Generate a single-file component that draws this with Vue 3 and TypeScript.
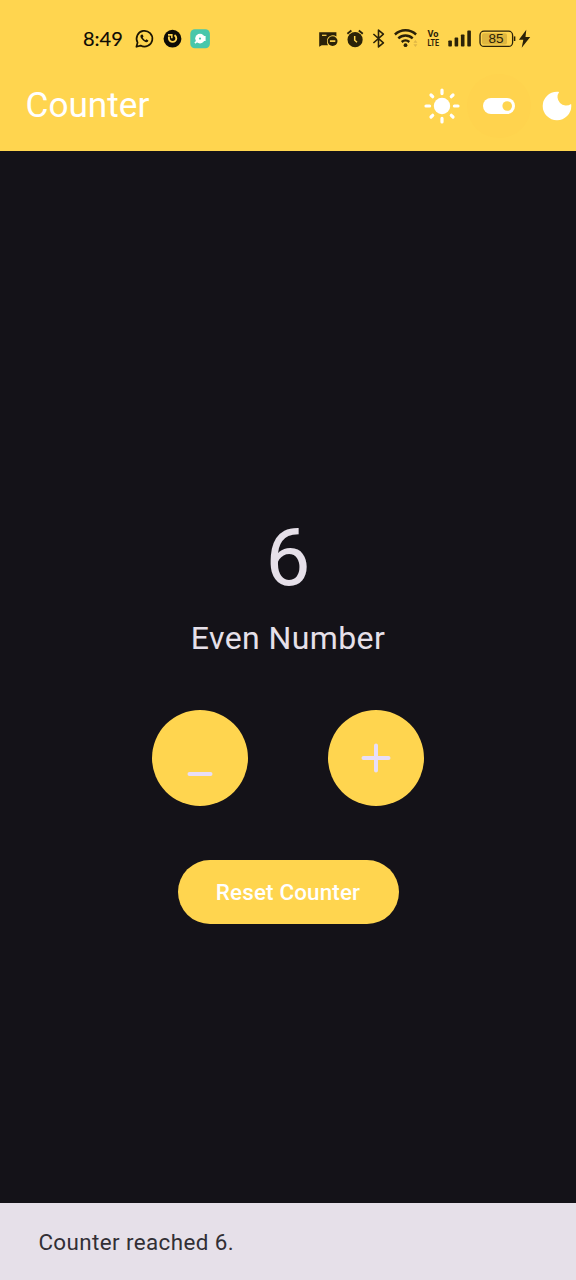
<script setup lang="ts">
import { computed, ref } from 'vue'

const count = ref(6)
const parity = computed(() => (count.value % 2 === 0 ? 'Even Number' : 'Odd Number'))
const battery = 85
</script>

<template>
  <div class="screen">
    <header class="top">
      <div class="status">
        <span class="time">8:49</span>
        <svg width="25" height="24" viewBox="134 27 25 24" fill="none" stroke="#1c1503">
          <path d="M136.400 46.800l1.200-4.200a7.900 7.900 0 1 1 3 3z" stroke-width="1.700" stroke-linejoin="round" />
          <path d="M141.200 34.700c-1.300.9-.9 2.600.8 4.600 2.200 2.600 4.600 3.800 6 2.100l.4-1-2-1.200-1 1c-1.200-.4-2.200-1.500-2.700-2.600l.8-1-.9-2z" fill="#1c1503" stroke="none" />
        </svg>
        <svg width="28" height="24" viewBox="159 27 28 24" fill="none">
          <circle cx="172.500" cy="38.700" r="8.900" fill="#0d0b05" />
          <path d="M168.900 36.500v1.700a3.700 3.700 0 0 0 7.400 0c0-1.500-.7-2.400-1.800-3.100" stroke="#ffd54f" stroke-width="1.900" />
          <path d="M168 34h4.600v4.300h-1.500v-2.500h-3.100z" fill="#ffd54f" />
        </svg>
        <svg width="26" height="24" viewBox="187 27 26 24" fill="none">
          <rect x="190.300" y="29.200" width="19.600" height="19" rx="4.500" fill="#48c7ab" />
          <circle cx="200" cy="38.600" r="4.800" fill="#fff" />
          <path d="M197.200 41.200l-2.300 1.800M204.800 36v5" stroke="#fff" stroke-width="1.600" />
          <circle cx="200" cy="38.600" r="1.100" fill="#48c7ab" />
        </svg>
        <span class="spacer" />
        <svg width="25" height="24" viewBox="318 27 25 24">
          <path d="M319.200 32.200h17.200v4.200a5.900 5.900 0 0 0-9.400 5.200 5.500 5.500 0 0 0 1 3.600h-6.300l-2.500 1.600z" fill="#2b2208" />
          <path d="M322 35.300h4.500" stroke="#ffd54f" stroke-width="1.200" />
          <circle cx="332.600" cy="41.100" r="4.900" fill="#2b2208" />
          <path d="M329.900 41.100h5.400" stroke="#ffd54f" stroke-width="1.700" />
        </svg>
        <svg width="25" height="24" viewBox="343 27 25 24" fill="none" stroke="#2b2208">
          <circle cx="355.100" cy="39.700" r="7.600" fill="#2b2208" stroke="none" />
          <path d="M347.400 33.800l4-3.300M362.800 33.800l-4-3.300" stroke-width="1.800" />
          <path d="M354.700 36v4.200l2.300 2" stroke="#ffd54f" stroke-width="1.500" />
        </svg>
        <svg width="22" height="24" viewBox="368 27 22 24" fill="none" stroke="#2b2208" stroke-width="1.600">
          <path d="M373.400 34l10 8.900-4.900 4V30.100l4.900 4-10 8.900" stroke-linejoin="round" />
        </svg>
        <svg width="33" height="24" viewBox="390 27 33 24" fill="none" stroke="#2b2208">
          <path d="M394.900 34.500a15.500 15.500 0 0 1 21.200 0M398.300 38.300a10.500 10.500 0 0 1 14.400 0M401.700 42a5.700 5.700 0 0 1 7.600 0" stroke-width="2.400" />
          <circle cx="405.500" cy="45.200" r="1.900" fill="#2b2208" stroke="none" />
          <path d="M413.400 42.700l2-2.700 2 2.700zM413.400 44.300l2 2.700 2-2.700z" fill="#dfb646" stroke="none" />
        </svg>
        <svg width="23" height="24" viewBox="423 27 23 24" class="volte">
          <text x="427.500" y="37" textLength="11" lengthAdjust="spacingAndGlyphs">Vo</text>
          <text x="427.500" y="46.200" textLength="11.500" lengthAdjust="spacingAndGlyphs">LTE</text>
        </svg>
        <svg width="29" height="24" viewBox="446 27 29 24" fill="#2b2208">
          <rect x="448.300" y="40.500" width="3.600" height="6" rx=".8" />
          <rect x="454.600" y="37.600" width="3.600" height="8.900" rx=".8" />
          <rect x="460.900" y="34.500" width="3.600" height="12" rx=".8" />
          <rect x="467.300" y="30.600" width="3.600" height="15.900" rx=".8" />
        </svg>
        <svg width="42" height="24" viewBox="475 27 42 24">
          <rect x="480" y="31.200" width="32.600" height="15.200" rx="4" fill="none" stroke="#2b2208" stroke-width="1.300" />
          <rect x="482" y="33.200" width="25" height="11.200" rx="2" fill="#dfb63f" />
          <path d="M514.600 36.400v4.600" stroke="#2b2208" stroke-width="1.500" />
          <text x="496" y="43.300" text-anchor="middle" class="battery">{{ battery }}</text>
        </svg>
        <svg width="15" height="24" viewBox="517 27 15 24" fill="#2b2208">
          <path d="M526.300 29.800l-7.400 10h4.400l-1.600 7.900 8.500-10.700h-4.700z" />
        </svg>
      </div>
      <div class="bar">
        <h1>Counter</h1>
        <svg class="sun" width="38" height="38" viewBox="-19 -19 38 38" fill="none" stroke="#fff" stroke-width="3.200" stroke-linecap="round">
          <circle r="8.200" fill="#fff" stroke="none" />
          <path d="M0-16v3.600M0 12.400v3.600M-16 0h3.600M12.400 0h3.600M-11-11l1.700 1.700M9.300 9.300l1.700 1.700M-11 11l1.700-1.700M9.300-9.300l1.700-1.700" />
        </svg>
        <button class="toggle" aria-label="Toggle theme">
          <svg width="34" height="18" viewBox="0 0 34 18">
            <rect x="1" y="1" width="32" height="16" rx="8" fill="#fff" />
            <circle cx="25.200" cy="9" r="4.800" fill="#ffd54f" />
          </svg>
        </button>
        <svg class="moon" width="30" height="30" viewBox="0 0 30 30">
          <path d="M15 .7a14.300 14.300 0 1 0 14.300 14.300c0-.8-.1-1.400-.2-2.100A8.600 8.600 0 0 1 17.100.9C16.400.8 15.700.7 15 .7z" fill="#fff" />
        </svg>
      </div>
    </header>

    <main>
      <div class="count">{{ count }}</div>
      <div class="parity">{{ parity }}</div>
      <div class="actions">
        <button class="round" aria-label="Decrease" @click="count--">
          <svg width="48" height="48" viewBox="0 0 48 48" stroke="#e8def8" stroke-width="4" stroke-linecap="round">
            <path d="M13.500 40h21" />
          </svg>
        </button>
        <button class="round" aria-label="Increase" @click="count++">
          <svg width="48" height="48" viewBox="0 0 48 48" stroke="#e8def8" stroke-width="4" stroke-linecap="round">
            <path d="M11.500 24h25M24 11.500v25" />
          </svg>
        </button>
      </div>
      <button class="reset" @click="count = 0">Reset Counter</button>
    </main>

    <footer>Counter reached {{ count }}.</footer>
  </div>
</template>

<style>
body {
  background: #141218;
}
</style>

<style scoped>
.screen {
  display: flex;
  flex-direction: column;
  width: 576px;
  height: 1280px;
  overflow: hidden;
  background: #141218;
  color: #e6e0e9;
  font-family: Roboto, 'Liberation Sans', sans-serif;
}
svg {
  display: block;
  flex: none;
}
button {
  border: 0;
  padding: 0;
  font: inherit;
}
.top {
  flex: none;
  height: 151px;
  background: #ffd54f;
}
.status {
  display: flex;
  align-items: center;
  height: 62px;
  padding: 16px 44px 0 83px;
  box-sizing: border-box;
}
.time {
  width: 51px;
  height: 26px;
  color: #0d0b05;
  font: 400 20px/24px Lato, sans-serif;
  -webkit-text-stroke: 0.15px #0d0b05;
  white-space: nowrap;
}
.spacer {
  flex: 1;
}
.volte {
  fill: #2b2208;
  font: 700 9.2px/1 Roboto, sans-serif;
}
.battery {
  fill: #2b2208;
  font: 400 13.5px 'Liberation Sans', sans-serif;
}
.bar {
  display: flex;
  align-items: center;
  height: 88px;
  padding-left: 25.5px;
}
h1 {
  flex: none;
  width: 397px;
  margin: 0;
  padding-bottom: 2px;
  color: #fff;
  font-size: 35.2px;
  font-weight: 400;
  line-height: 44px;
}
.toggle {
  display: flex;
  flex: none;
  align-items: center;
  justify-content: center;
  width: 64px;
  height: 64px;
  margin: 0 11px 0 6.5px;
  border-radius: 50%;
  background: #ffd34e;
}
main {
  display: flex;
  flex: 1;
  flex-direction: column;
  align-items: center;
  padding-top: 360px;
}
.count {
  font-size: 80px;
  line-height: 94px;
}
.parity {
  margin-top: 14px;
  font-size: 32px;
  line-height: 38px;
  letter-spacing: 0.4px;
}
.actions {
  display: flex;
  gap: 80px;
  margin-top: 53px;
}
.round {
  display: flex;
  align-items: center;
  justify-content: center;
  width: 96px;
  height: 96px;
  border-radius: 50%;
  background: #ffd54f;
}
.reset {
  width: 221px;
  height: 64px;
  margin-top: 54px;
  border-radius: 32px;
  background: #ffd54f;
  color: #fff;
  font-size: 22.4px;
  font-weight: 500;
  letter-spacing: 0.16px;
}
footer {
  flex: none;
  height: 77px;
  padding-left: 38.4px;
  background: #e6e0e9;
  color: #322f35;
  font-size: 22.4px;
  line-height: 78px;
  letter-spacing: 0.4px;
}
</style>
